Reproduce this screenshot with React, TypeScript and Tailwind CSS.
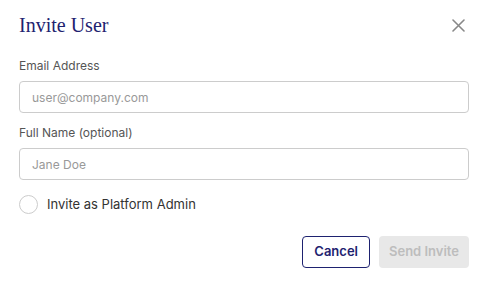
export default function App() {
  return (
    <div className="h-[287px] w-[488px] bg-white px-[19px] pt-[12px]" style={{ fontFamily: "Inter, 'Liberation Sans', sans-serif" }}>
      <div className="flex items-center justify-between">
        <h2 className="text-[20px] leading-[26px] text-[#1e2270]" style={{ fontFamily: "'Liberation Serif', Georgia, serif" }}>
          Invite User
        </h2>
        <button className="mr-[3px] flex h-4 w-4 items-center justify-center text-[#888]">
          <svg width="13" height="13" viewBox="0 0 13 13" fill="none" stroke="currentColor" strokeWidth="1.6" strokeLinecap="round">
            <path d="M1 1L12 12M12 1L1 12" />
          </svg>
        </button>
      </div>

      <div className="mt-[20px]">
        <label className="block text-[12px] leading-[16px] text-[#555]">Email Address</label>
        <input
          className="mt-[7px] block h-[32px] w-full rounded-[4px] border border-[#ccc] px-[12px] text-[12px] placeholder:text-[#999] outline-none"
          placeholder="user@company.com"
        />
      </div>

      <div className="mt-[12px]">
        <label className="block text-[12px] leading-[16px] text-[#555]">Full Name (optional)</label>
        <input
          className="mt-[7px] block h-[32px] w-full rounded-[4px] border border-[#ccc] px-[12px] text-[12px] placeholder:text-[#999] outline-none"
          placeholder="Jane Doe"
        />
      </div>

      <label className="mt-[15px] flex items-center gap-[9px]">
        <span className="h-[19px] w-[19px] rounded-full border border-[#ccc]" />
        <span className="text-[13px] text-[#333]">Invite as Platform Admin</span>
      </label>

      <div className="mt-[21px] flex justify-end gap-[9px]">
        <button className="h-[32px] rounded-[4px] border border-[#1e2270] px-[11px] text-[13px] font-semibold text-[#1e2270]">
          Cancel
        </button>
        <button className="h-[32px] rounded-[4px] bg-[#e8e8e8] px-[10px] text-[13px] font-semibold text-[#bdbdbd]">
          Send Invite
        </button>
      </div>
    </div>
  );
}
